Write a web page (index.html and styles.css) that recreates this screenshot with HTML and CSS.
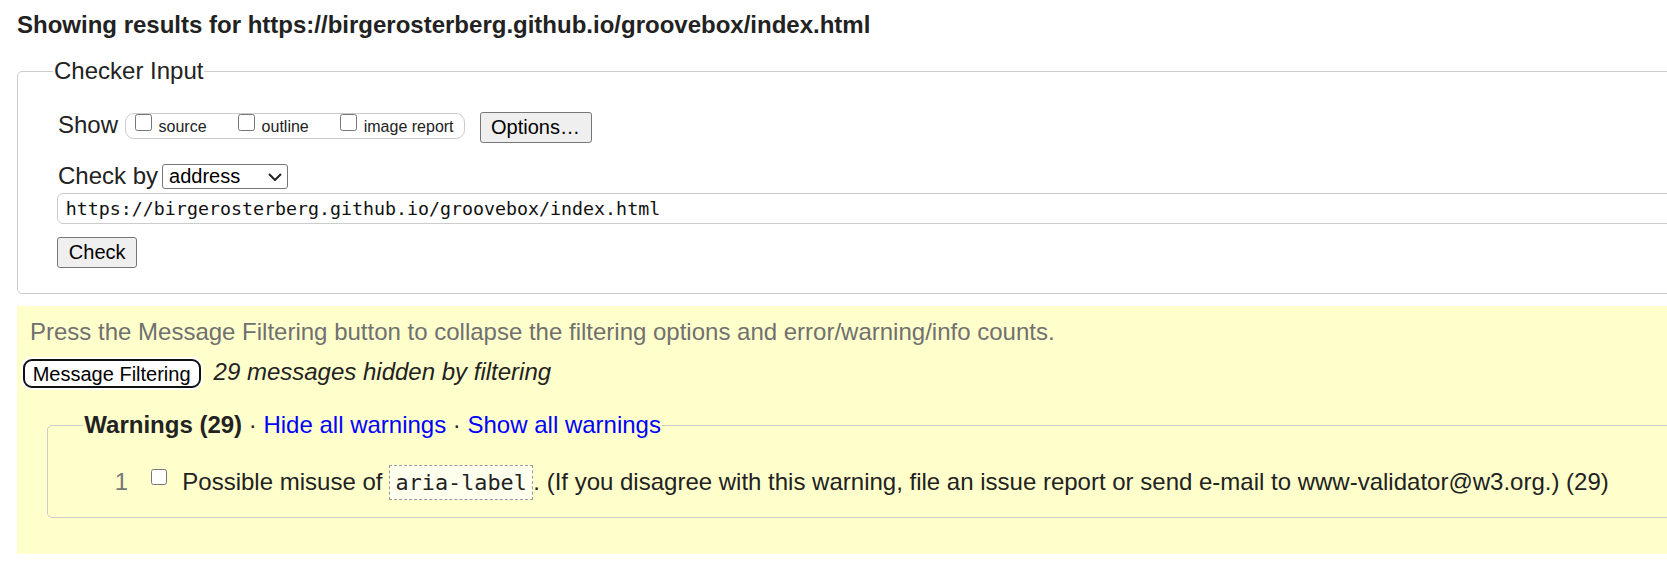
FILE: index.html
```html
<!DOCTYPE html>
<html lang="en">
<head>
<meta charset="utf-8">
<title>Showing results for https://birgerosterberg.github.io/groovebox/index.html - Nu Html Checker</title>
<link rel="stylesheet" href="styles.css">
</head>
<body>
<div class="page">
  <h2 class="results-title">Showing results for https://birgerosterberg.github.io/groovebox/index.html</h2>
  <fieldset class="checker">
    <legend class="checker-legend">Checker Input</legend>
    <div class="row row-show">
      <span class="row-label">Show</span>
      <span class="show-group">
        <label class="show-opt"><input type="checkbox" class="cb cb-show"><span class="opt-text">source</span></label>
        <label class="show-opt"><input type="checkbox" class="cb cb-show"><span class="opt-text">outline</span></label>
        <label class="show-opt"><input type="checkbox" class="cb cb-show"><span class="opt-text">image report</span></label>
      </span>
      <button class="btn btn-options" type="button">Options…</button>
    </div>
    <div class="row row-checkby">
      <label class="row-label" for="docselect">Check by</label>
      <span class="select-wrap">
        <select class="select" id="docselect"><option>address</option><option>file upload</option><option>text input</option></select>
        <svg class="chevron" width="14" height="8" viewBox="0 0 14 8" aria-hidden="true"><path d="M1 1 L7 7 L13 1" fill="none" stroke="#222" stroke-width="2" stroke-linejoin="miter"/></svg>
      </span>
    </div>
    <input class="url" type="url" value="https://birgerosterberg.github.io/groovebox/index.html">
    <div class="row row-submit"><button class="btn btn-check" type="button">Check</button></div>
  </fieldset>
  <section class="filtering">
    <p class="filter-hint">Press the Message Filtering button to collapse the filtering options and error/warning/info counts.</p>
    <div class="filter-row">
      <button class="btn-filter" type="button">Message Filtering</button>
      <em class="hidden-count">29 messages hidden by filtering</em>
    </div>
    <fieldset class="warnings">
      <legend class="warnings-legend"><strong>Warnings (29)</strong> · <a class="lnk" href="#">Hide all warnings</a> · <a class="lnk" href="#">Show all warnings</a></legend>
      <div class="msg">
        <span class="msg-num">1</span>
        <input type="checkbox" class="cb cb-msg">
        <span class="msg-text">Possible misuse of <code class="code">aria-label</code>. (If you disagree with this warning, file an issue report or send e-mail to www-validator@w3.org.) (29)</span>
      </div>
    </fieldset>
  </section>
</div>
</body>
</html>
```
FILE: styles.css
```css
html {
  overflow: hidden;
}

body {
  margin: 0;
  background: #fff;
  color: #222;
  font-family: "Liberation Sans", Arial, sans-serif;
}

.page {
  width: 1900px;
  padding: 11px 0 0 17px;
}

.results-title {
  margin: 0;
  font-size: 24px;
  line-height: 27.6px;
  font-weight: bold;
}

/* ---------- checker input ---------- */
.checker {
  margin: 18.6px 0 0;
  padding: 26px 0 24.5px 40px;
  border: 1px solid #ccc;
  border-radius: 5px;
  min-width: 0;
}

.checker-legend {
  font-size: 24px;
  line-height: 28px;
  padding: 0 1px;
  margin-left: -5px;
}

.row {
  display: flex;
  align-items: flex-start;
}

.row-label {
  font-size: 24px;
  line-height: 27.6px;
}

.row-show {
  height: 31px;
}

.show-group {
  display: flex;
  gap: 31px;
  box-sizing: border-box;
  height: 26px;
  margin: 2px 0 0 6.5px;
  padding: 0 10px 0 9px;
  border: 1px solid #ccc;
  border-radius: 9px;
}

.show-opt {
  display: flex;
  align-items: flex-start;
  gap: 7px;
  font-size: 16px;
  line-height: 18.4px;
}

.cb {
  margin: 0;
  flex: none;
}

.cb-show {
  width: 17px;
  height: 17px;
  margin-top: 0.3px;
}

.opt-text {
  margin-top: 4.3px;
}

.btn {
  box-sizing: border-box;
  height: 31px;
  padding: 3px 10.5px;
  border: 1px solid #767676;
  border-radius: 3px;
  background: #efefef;
  color: #000;
  font-family: "Liberation Sans", Arial, sans-serif;
  font-size: 20px;
  line-height: 23px;
}

.btn-options {
  margin-left: 15px;
  margin-top: 0.5px;
}

.row-checkby {
  margin-top: 20px;
}

.select-wrap {
  position: relative;
  display: block;
  margin: 1.8px 0 0 4px;
}

.select {
  display: block;
  box-sizing: border-box;
  width: 126px;
  height: 25.4px;
  padding: 0 0 0 6px;
  border: 1px solid #767676;
  border-radius: 3px;
  background: #fff;
  color: #000;
  font-family: "Liberation Sans", Arial, sans-serif;
  font-size: 20px;
  line-height: 23px;
  appearance: none;
  -webkit-appearance: none;
}

.chevron {
  position: absolute;
  right: 6.5px;
  top: 9px;
  pointer-events: none;
}

.url {
  display: block;
  box-sizing: border-box;
  width: 100%;
  height: 31px;
  margin: 3.5px 0 0 -0.7px;
  padding: 0 7.5px;
  border: 1px solid #ccc;
  border-radius: 6px;
  background: #fff;
  color: #111;
  font-family: "DejaVu Sans Mono", "Liberation Mono", monospace;
  font-size: 18.3px;
}

.row-submit {
  margin-top: 13px;
}

.btn-check {
  margin-left: -0.7px;
}

/* ---------- filtering ---------- */
.filtering {
  margin-top: 12px;
  padding: 12px 0 35.7px 13px;
  background: #ffc;
}

.filter-hint {
  margin: 0;
  color: #707070;
  font-size: 24px;
  line-height: 27.6px;
}

.filter-row {
  display: flex;
  align-items: flex-start;
  margin-top: 12.4px;
}

.btn-filter {
  box-sizing: border-box;
  height: 29px;
  margin: 1.4px 0 0 -7.3px;
  padding: 1px 8px;
  border: 2.5px solid #101010;
  border-radius: 9px;
  background: #fff;
  color: #000;
  box-shadow: 0 0 0 1.7px #fff;
  font-family: "Liberation Sans", Arial, sans-serif;
  font-size: 20px;
  line-height: 22px;
}

.hidden-count {
  margin-left: 13px;
  font-size: 24px;
  line-height: 27.6px;
  font-style: italic;
}

.warnings {
  margin: 22.9px 0 0 17.3px;
  padding: 28.7px 0 20.5px 40px;
  border: 1px solid #ccc;
  border-radius: 5px;
  min-width: 0;
}

.warnings-legend {
  font-size: 24px;
  line-height: 28px;
  padding: 0 1px;
  margin-left: -5px;
}

.lnk {
  color: #00f;
  text-decoration: none;
}

.msg {
  display: flex;
  align-items: flex-start;
  font-size: 24px;
  line-height: 27.6px;
}

.msg-num {
  margin-left: 26.4px;
  color: #777;
}

.cb-msg {
  width: 16.6px;
  height: 16.6px;
  margin: 1.1px 0 0 22.7px;
}

.msg-text {
  margin-left: 15px;
  white-space: nowrap;
}

.code {
  padding: 4px 5.5px;
  border: 1px dashed #999;
  background: #ffe;
  font-family: "DejaVu Sans Mono", "Liberation Mono", monospace;
  font-size: 21.8px;
}
```
